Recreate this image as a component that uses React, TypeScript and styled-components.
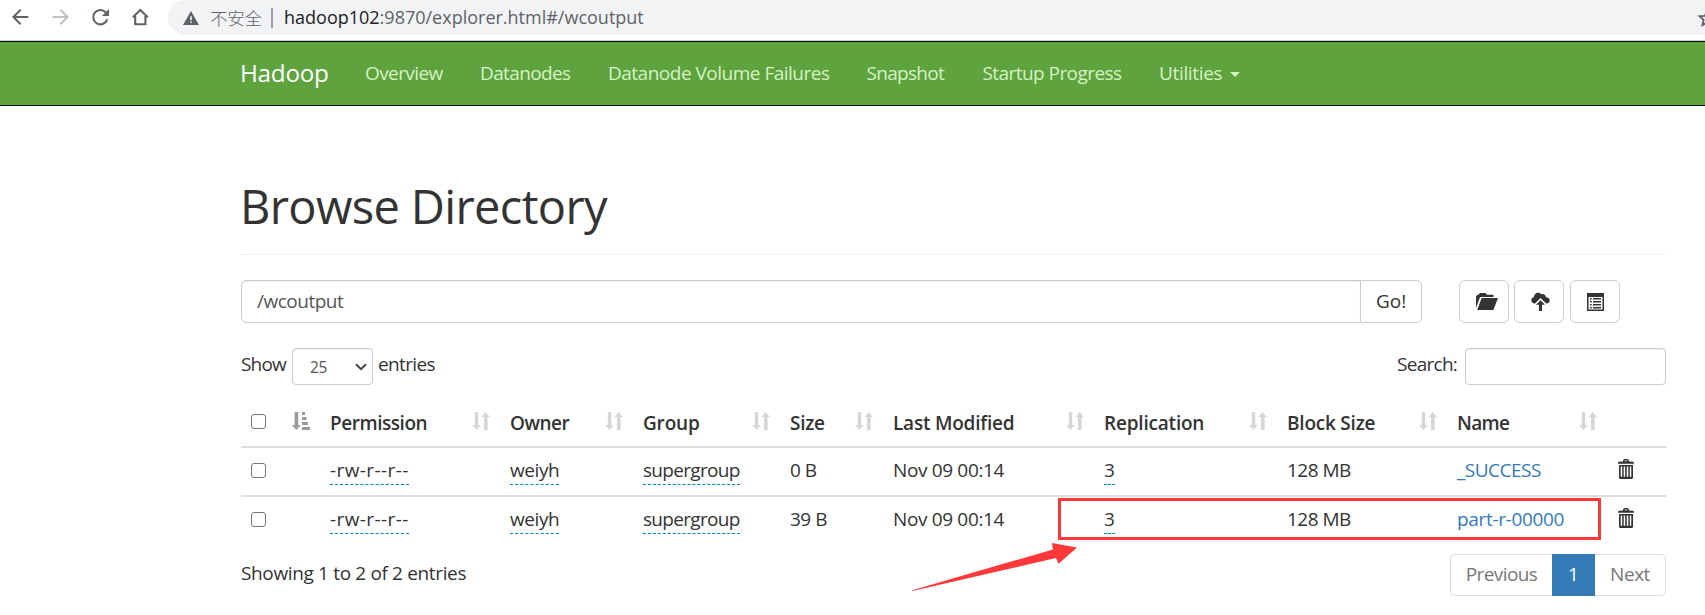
import React from "react";
import styled, { createGlobalStyle } from "styled-components";

const GlobalStyle = createGlobalStyle`
  * { box-sizing: border-box; }
  body {
    margin: 0;
    background: #fff;
    color: #333;
    font-family: "Open Sans", "Noto Sans CJK SC", sans-serif;
    font-size: 19px;
    line-height: 27px;
    overflow: hidden;
  }
`;

const Page = styled.div`
  position: relative;
  width: 1705px;
  height: 615px;
  overflow: hidden;
`;

const Text = styled.span<{ $ls?: number }>`
  white-space: pre;
  letter-spacing: ${(p) => p.$ls ?? 0}px;
`;

/* Browser toolbar */
const Toolbar = styled.div`
  display: flex;
  height: 41px;
  border-bottom: 1px solid #d0d0d0;
`;

const ToolbarIcons = styled.div`
  display: flex;
  width: 168px;
  height: 34px;
  padding-left: 10px;
  gap: 20px;
  align-items: center;
  flex: none;
`;

const AddressBar = styled.div`
  display: flex;
  flex: 1;
  height: 35px;
  align-items: center;
  padding-left: 15px;
  background: #f1f3f4;
  border-radius: 18px 0 0 18px;
  font-size: 18px;
  color: #5f6368;
  overflow: hidden;
`;

const Insecure = styled.span`
  margin-left: 11px;
  width: 56px;
  font-size: 17.6px;
  font-weight: 300;
  line-height: 34px;
  font-family: "Noto Sans CJK SC", sans-serif;
`;

const Divider = styled.span`
  width: 2px;
  height: 20px;
  margin: 0 11px 0 5px;
  background: #9aa0a6;
`;

const Url = styled.span`
  flex: 1;
  line-height: 33px;
  padding-bottom: 1px;
  b { font-weight: 400; color: #202124; }
`;

const StarBox = styled.span`
  width: 8px;
  height: 20px;
  overflow: hidden;
`;

/* Green navigation bar */
const Nav = styled.nav`
  display: flex;
  height: 65px;
  padding-left: 240px;
  background: #5fa33e;
  border: solid #080808;
  border-width: 1px 0;
  color: #d4f2c4;
`;

const Brand = styled.div`
  width: 125px;
  padding-top: 17px;
  font-size: 24.3px;
  color: #fff;
`;

const NavItem = styled.div<{ $w: number }>`
  width: ${(p) => p.$w}px;
  padding-top: 18px;
`;

const Caret = styled.span`
  display: inline-block;
  margin-left: 8px;
  vertical-align: middle;
  border-top: 5px solid #d4f2c4;
  border-left: 5px solid transparent;
  border-right: 5px solid transparent;
`;

/* Content */
const Content = styled.main`
  width: 1425px;
  margin-left: 241px;
  padding-top: 70px;
`;

const Title = styled.h1`
  margin: 0;
  height: 79px;
  font-size: 47px;
  font-weight: 400;
  line-height: 60px;
  border-bottom: 1px solid #eee;
  text-indent: -1px;
`;

const PathRow = styled.div`
  display: flex;
  height: 43px;
  margin-top: 25px;
`;

const PathInput = styled.div`
  width: 1120px;
  padding: 7px 15px;
  border: 1px solid #ccc;
  border-radius: 5px 0 0 5px;
  box-shadow: inset 0 1px 1px rgba(0, 0, 0, 0.075);
  color: #555;
`;

const GoButton = styled.div`
  width: 61px;
  margin-right: 37px;
  padding: 7px 0 0 15px;
  border: 1px solid #ccc;
  border-left: 0;
  border-radius: 0 5px 5px 0;
`;

const IconButton = styled.div<{ $shift?: number }>`
  display: flex;
  width: 50px;
  height: 43px;
  margin-right: 5.4px;
  padding-left: ${(p) => p.$shift ?? 0}px;
  align-items: center;
  justify-content: center;
  border: 1px solid #ccc;
  border-radius: 6px;
`;

const ControlsRow = styled.div`
  display: flex;
  height: 76px;
  padding-top: 25px;
`;

const ControlLabel = styled.span<{ $w: number }>`
  width: ${(p) => p.$w}px;
  height: 27px;
  padding-top: 3px;
`;

const SelectBox = styled.div`
  display: flex;
  width: 81px;
  height: 37px;
  margin-right: 5px;
  padding: 1px 5px 0 17px;
  align-items: center;
  justify-content: space-between;
  border: 1px solid #ccc;
  border-radius: 4px;
  box-shadow: inset 0 1px 1px rgba(0, 0, 0, 0.075);
  font-size: 15.5px;
  color: #555;
`;

const SearchGroup = styled.div`
  display: flex;
  margin-left: auto;
`;

const SearchBox = styled.div`
  width: 201px;
  height: 37px;
  border: 1px solid #ccc;
  border-radius: 4px;
  box-shadow: inset 0 1px 1px rgba(0, 0, 0, 0.075);
`;

/* Table */
const Row = styled.div<{ $head?: boolean; $last?: boolean }>`
  display: grid;
  grid-template-columns: 78px 180px 133px 147px 103px 211px 183px 170px 160px 60px;
  height: 49px;
  border-bottom: ${(p) => (p.$last ? 0 : 2)}px solid #ddd;
  font-weight: ${(p) => (p.$head ? 600 : 400)};
`;

const Cell = styled.div<{ $top?: number }>`
  display: flex;
  align-items: flex-start;
  justify-content: space-between;
  padding: ${(p) => p.$top ?? 9}px 9px 0 11px;
`;

const CheckCell = styled(Cell)`
  padding-left: 10px;
`;

const Check = styled.span`
  width: 15px;
  height: 15px;
  margin-top: 6px;
  border: 1.5px solid #767676;
  border-radius: 3px;
  background: #fff;
`;

const SortIcon = styled.svg<{ $top: number }>`
  width: 18px;
  height: 18px;
  margin-top: ${(p) => p.$top}px;
`;

const Editable = styled(Text)`
  border-bottom: 1px dashed #08c;
`;

const FileLink = styled(Text)`
  color: #337ab7;
`;

const TrashBox = styled.svg<{ $top: number }>`
  width: 16px;
  height: 20px;
  margin: ${(p) => p.$top}px 0 0 1px;
`;

const Footer = styled.div`
  display: flex;
  justify-content: space-between;
  padding-top: 8px;
`;

const Info = styled.div`
  padding-top: 6px;
`;

const Pager = styled.div`
  display: flex;
  width: 216px;
  height: 42px;
  color: #777;
`;

const PageButton = styled.div<{ $w: number; $active?: boolean; $side?: "l" | "r" }>`
  width: ${(p) => p.$w}px;
  padding-top: ${(p) => (p.$active ? 7 : 6)}px;
  text-align: center;
  border: ${(p) => (p.$active ? "0" : "1px solid #ddd")};
  border-left-width: ${(p) => (p.$side === "l" ? 1 : 0)}px;
  border-right-width: ${(p) => (p.$side === "r" ? 1 : 0)}px;
  border-radius: ${(p) => (p.$side === "l" ? "5px 0 0 5px" : p.$side === "r" ? "0 5px 5px 0" : "0")};
  ${(p) => p.$active && "background: #337ab7; color: #fff;"}
`;

/* Annotations drawn over the table */
const Highlight = styled.div`
  position: absolute;
  left: 1058px;
  top: 498px;
  width: 543px;
  height: 42px;
  border: 3px solid #fd3838;
`;

const Arrow = styled.svg`
  position: absolute;
  left: 900px;
  top: 535px;
`;

const SortBoth = () => (
  <SortIcon $top={2} viewBox="0 0 18 18" fill="#d6d6d6">
    <path d="M2.8 0h3.4v13h2.6L4.500 18 .2 13h2.6zM12 18h3.600V5h2.200L13.600 0 9.400 5H12z" />
  </SortIcon>
);

const SortAsc = () => (
  <SortIcon $top={4} viewBox="0 0 18 18" fill="#999">
    <path d="M2.600 0h3.600v13h2.600L4.400 18 0 13h2.600zM10 0h3v3h-3zM10 5h4.500v3H10zM10 10h6v3h-6zM10 15h8v3h-8z" />
  </SortIcon>
);

const Trash = ({ top }: { top: number }) => (
  <TrashBox $top={top} viewBox="0 0 16 20" fill="#333">
    <path d="M5 2.400C5 1 5.700 0 7 0h2c1.300 0 2 1 2 2.400l4 .4c.6.100 1 .5 1 1.200v.8H0V4c0-.7.4-1.100 1-1.200zM6.300 2.300h3.400c0-.6-.4-.9-.9-.9H7.200c-.5 0-.9.3-.9.9z" />
    <path fillRule="evenodd" d="M1 6h14v12.500c0 .9-.6 1.500-1.500 1.500h-11C1.600 20 1 19.400 1 18.500zM2.700 7.500v10.300h1.500V7.500zM5.700 7.500v10.300h1.500V7.500zM8.800 7.500v10.300h1.500V7.500zM11.800 7.500v10.300h1.500V7.500z" />
  </TrashBox>
);

const headers: [string, number][] = [
  ["Permission", -0.45],
  ["Owner", -0.49],
  ["Group", -0.17],
  ["Size", -0.28],
  ["Last Modified", -0.22],
  ["Replication", -0.2],
  ["Block Size", -0.22],
  ["Name", -0.68],
];

const files = [
  { size: "0 B", name: "_SUCCESS", nameLs: -0.5, top: 9 },
  { size: "39 B", name: "part-r-00000", nameLs: -0.33, top: 8.5 },
];

const navItems: [string, number, number][] = [
  ["Overview", -0.6, 115],
  ["Datanodes", -0.63, 128],
  ["Datanode Volume Failures", -0.5, 258.5],
  ["Snapshot", -0.7, 116],
  ["Startup Progress", -0.56, 176.5],
];

export default function App() {
  return (
    <Page>
      <GlobalStyle />
      <Toolbar>
        <ToolbarIcons>
          <svg width="20" height="20" viewBox="0 0 20 20" fill="none" stroke="#5f6368" strokeWidth="2">
            <path d="M18.300 10H4M10.600 2.700 3.400 10l7.200 7.300" />
          </svg>
          <svg width="20" height="20" viewBox="0 0 20 20" fill="none" stroke="#bdc0c3" strokeWidth="2">
            <path d="M2.700 10H17M10.400 2.700l7.200 7.300-7.200 7.300" />
          </svg>
          <svg width="20" height="20" viewBox="0 0 20 20" fill="none" stroke="#5f6368" strokeWidth="2.100">
            <path d="M17.300 12.300A7.200 7.200 0 1 1 15.600 5.200L17 6.600" />
            <path d="M19 2v7h-7z" fill="#5f6368" stroke="none" />
          </svg>
          <svg width="20" height="20" viewBox="0 0 20 20" fill="none" stroke="#5f6368" strokeWidth="2.100">
            <path d="M2.800 10.200 10.300 3l7.500 7.200M5.200 9v8.200h10.200V9" />
          </svg>
        </ToolbarIcons>
        <AddressBar>
          <svg width="16" height="14" viewBox="0 0 16 14">
            <path d="M8 0l8 14H0z" fill="#5f6368" />
            <path d="M7.200 5.300h1.600v4H7.200zM7.200 10.500h1.600v1.600H7.200z" fill="#f1f3f4" />
          </svg>
          <Insecure><Text $ls={-0.3}>不安全</Text></Insecure>
          <Divider />
          <Url><b>hadoop102</b>:9870/explorer.html#/wcoutput</Url>
          <StarBox>
            <svg width="20" height="20" viewBox="0 0 20 20" fill="none" stroke="#5f6368" strokeWidth="1.800">
              <path d="M10 2.800l2.100 5 5.400.5-4.100 3.600 1.200 5.300L10 14.400l-4.600 2.800 1.200-5.300-4.100-3.600 5.400-.5z" />
            </svg>
          </StarBox>
        </AddressBar>
      </Toolbar>

      <Nav>
        <Brand><Text $ls={-0.3}>Hadoop</Text></Brand>
        {navItems.map(([label, ls, w]) => (
          <NavItem key={label} $w={w}><Text $ls={ls}>{label}</Text></NavItem>
        ))}
        <NavItem $w={90}><Text $ls={-0.34}>Utilities</Text><Caret /></NavItem>
      </Nav>

      <Content>
        <Title><Text $ls={-0.64}>Browse Directory</Text></Title>

        <PathRow>
          <PathInput><Text $ls={-0.49}>/wcoutput</Text></PathInput>
          <GoButton><Text>Go!</Text></GoButton>
          <IconButton $shift={5}>
            <svg width="22" height="17" viewBox="0 0 22 17" fill="#333">
              <path d="M0 15V3.500L1.500 1.800h1L4 0h5.500L11 1.800h6.500V4H5.200c-.7 0-1.200.3-1.500 1z" />
              <path d="M5.600 5H22l-4.600 12H1.200z" />
            </svg>
          </IconButton>
          <IconButton $shift={2}>
            <svg width="19" height="19" viewBox="0 0 19 19" fill="#333">
              <path d="M4 11.500C1.800 11.500.3 10.200.3 8.300c0-1.600 1-2.800 2.600-3C3 2.600 4.700.8 7 .8c1.300 0 2.400.5 3.200 1.500 2.300-1 4.700.5 4.800 2.900 2.200.1 3.700 1.300 3.700 3.200 0 1.800-1.400 3.100-3.400 3.100L9.500 6 4 11.500z" />
              <path d="M9.500 8.300l4.500 4.500h-3V19H8v-6.200H5z" />
            </svg>
          </IconButton>
          <IconButton $shift={2}>
            <svg width="17" height="18" viewBox="0 0 17 18" fill="#333">
              <path fillRule="evenodd" d="M0 0h17v18H0zM1.500 4v12.500h14V4z" />
              <path d="M3 5h1.700v1.500H3zM6 5h8v1.500H6zM3 8h1.700v1.500H3zM6 8h8v1.500H6zM3 11h1.700v1.500H3zM6 11h8v1.500H6zM3 14h1.700v1.500H3zM6 14h8v1.500H6z" />
            </svg>
          </IconButton>
        </PathRow>

        <ControlsRow>
          <ControlLabel $w={51}><Text $ls={-0.83}>Show</Text></ControlLabel>
          <SelectBox>
            <Text $ls={-0.36}>25</Text>
            <svg width="12" height="8" viewBox="0 0 12 8" fill="none" stroke="#444" strokeWidth="2">
              <path d="M1 1.200l5 5 5-5" />
            </svg>
          </SelectBox>
          <ControlLabel $w={60}><Text $ls={-0.65}>entries</Text></ControlLabel>
          <SearchGroup>
            <ControlLabel $w={68}><Text $ls={-0.72}>Search:</Text></ControlLabel>
            <SearchBox />
          </SearchGroup>
        </ControlsRow>

        <Row $head>
          <CheckCell><Check /><SortAsc /></CheckCell>
          {headers.map(([label, ls]) => (
            <Cell key={label} $top={11}><Text $ls={ls}>{label}</Text><SortBoth /></Cell>
          ))}
          <Cell />
        </Row>
        {files.map((f, i) => (
          <Row key={f.name} $last={i === 1}>
            <CheckCell><Check /></CheckCell>
            <Cell $top={f.top}><Editable $ls={0.4}>-rw-r--r--</Editable></Cell>
            <Cell $top={f.top}><Editable $ls={-0.43}>weiyh</Editable></Cell>
            <Cell $top={f.top}><Editable $ls={-0.7}>supergroup</Editable></Cell>
            <Cell $top={f.top}><Text $ls={-0.5}>{f.size}</Text></Cell>
            <Cell $top={f.top}><Text $ls={-0.35}>Nov 09 00:14</Text></Cell>
            <Cell $top={f.top}><Editable>3</Editable></Cell>
            <Cell $top={f.top}><Text $ls={-0.52}>128 MB</Text></Cell>
            <Cell $top={f.top}><FileLink $ls={f.nameLs}>{f.name}</FileLink></Cell>
            <Cell $top={f.top}><Trash top={2} /></Cell>
          </Row>
        ))}

        <Footer>
          <Info><Text $ls={-0.35}>Showing 1 to 2 of 2 entries</Text></Info>
          <Pager>
            <PageButton $w={102} $side="l"><Text $ls={-0.6}>Previous</Text></PageButton>
            <PageButton $w={43} $active>1</PageButton>
            <PageButton $w={71} $side="r"><Text $ls={-0.47}>Next</Text></PageButton>
          </Pager>
        </Footer>
      </Content>

      <Highlight />
      <Arrow width="190" height="65" viewBox="900 535 190 65">
        <path d="M912.300 590.200L1053 549.500 1052 543l25 4.600-18.500 16.200-2.500-5.900L912.500 591z" fill="#fd3838" />
      </Arrow>
    </Page>
  );
}
